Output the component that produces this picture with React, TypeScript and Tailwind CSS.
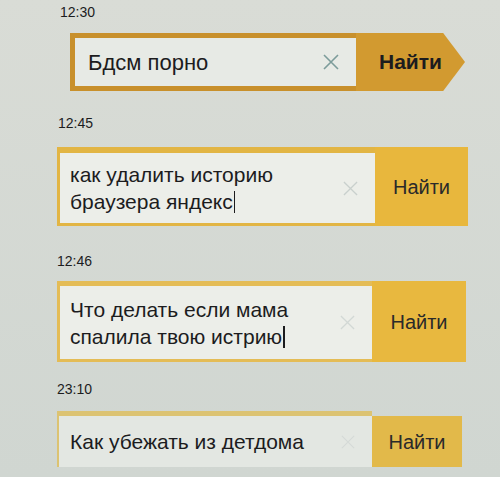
import React from "react";

const XIcon = ({ color, size, w = 1.6 }: { color: string; size: number; w?: number }) => (
  <svg width={size} height={size} viewBox="0 0 16 16" className="shrink-0">
    <path d="M1 1L15 15M15 1L1 15" stroke={color} strokeWidth={w} fill="none" />
  </svg>
);

const Cursor = () => <span className="ml-[1px] inline-block h-[22px] w-[1.5px] translate-y-[4px] bg-[#1c1c1e]" />;

export default function App() {
  return (
    <div className="flex h-[477px] w-[500px] flex-col overflow-hidden bg-gradient-to-b from-[#d9dcd6] to-[#d0d6d1] pt-[5px] font-['Liberation_Sans',Arial,sans-serif] text-[#1c1c1e]">
      {/* 12:30 */}
      <div className="ml-[60px] text-[14px] leading-[14px]">12:30</div>
      <div className="ml-[70px] mt-[14px] flex h-[58px]">
        <div className="flex w-[286px] items-center border-y-[5px] border-l-[5px] border-[#c8902c] bg-[#e7eae5] pl-[13px] pr-[17px]">
          <span className="flex-1 text-[22px]">Бдсм порно</span>
          <XIcon color="#7c9c9a" size={16} />
        </div>
        <div className="flex w-[109px] items-center justify-center bg-[#d29a30] text-[21px] font-bold [clip-path:polygon(0_0,80%_0,100%_50%,80%_100%,0_100%)]">
          Найти
        </div>
      </div>

      {/* 12:45 */}
      <div className="ml-[58px] mt-[25px] text-[14px] leading-[14px]">12:45</div>
      <div className="ml-[57px] mt-[17px] flex h-[79px] w-[411px]">
        <div className="flex w-[318px] items-center border-b-[3px] border-l-[3px] border-t-[6px] border-[#e2b544] bg-[#eceee9] pl-[10px] pr-[17px]">
          <span className="flex-1 text-[21px] leading-[24px]">
            как удалить историю
            <br />
            браузера яндекс
            <Cursor />
          </span>
          <XIcon color="#c9d0cd" size={15} w={1.4} />
        </div>
        <div className="flex flex-1 items-center justify-center bg-[#e8b73d] text-[20px] text-[#2a2a2a]">Найти</div>
      </div>

      {/* 12:46 */}
      <div className="ml-[57px] mt-[28px] text-[14px] leading-[14px]">12:46</div>
      <div className="ml-[57px] mt-[13px] flex h-[81px] w-[409px]">
        <div className="flex w-[315px] items-center border-b-[3px] border-l-[3px] border-t-[5px] border-[#e4bc56] bg-[#eceee9] pl-[10px] pr-[17px]">
          <span className="flex-1 text-[21px] leading-[25px]">
            Что делать если мама
            <br />
            спалила твою истрию
            <Cursor />
          </span>
          <XIcon color="#d2d8d5" size={15} w={1.4} />
        </div>
        <div className="flex flex-1 items-center justify-center bg-[#e8b83f] text-[20px] text-[#2a2a2a]">Найти</div>
      </div>

      {/* 23:10 */}
      <div className="ml-[57px] mt-[20px] text-[14px] leading-[14px]">23:10</div>
      <div className="ml-[57px] mt-[15px] flex h-[56px] w-[405px] items-end">
        <div className="flex h-full w-[315px] items-center border-l-[2px] border-t-[5px] border-[#dcc372] bg-[#e3e7e2] pl-[11px] pr-[17px]">
          <span className="flex-1 text-[21px]">Как убежать из детдома</span>
          <XIcon color="#d5dad7" size={14} w={1.3} />
        </div>
        <div className="flex h-[51px] flex-1 items-center justify-center bg-[#e2b94a] text-[20px] text-[#2a2a2a]">Найти</div>
      </div>
    </div>
  );
}
